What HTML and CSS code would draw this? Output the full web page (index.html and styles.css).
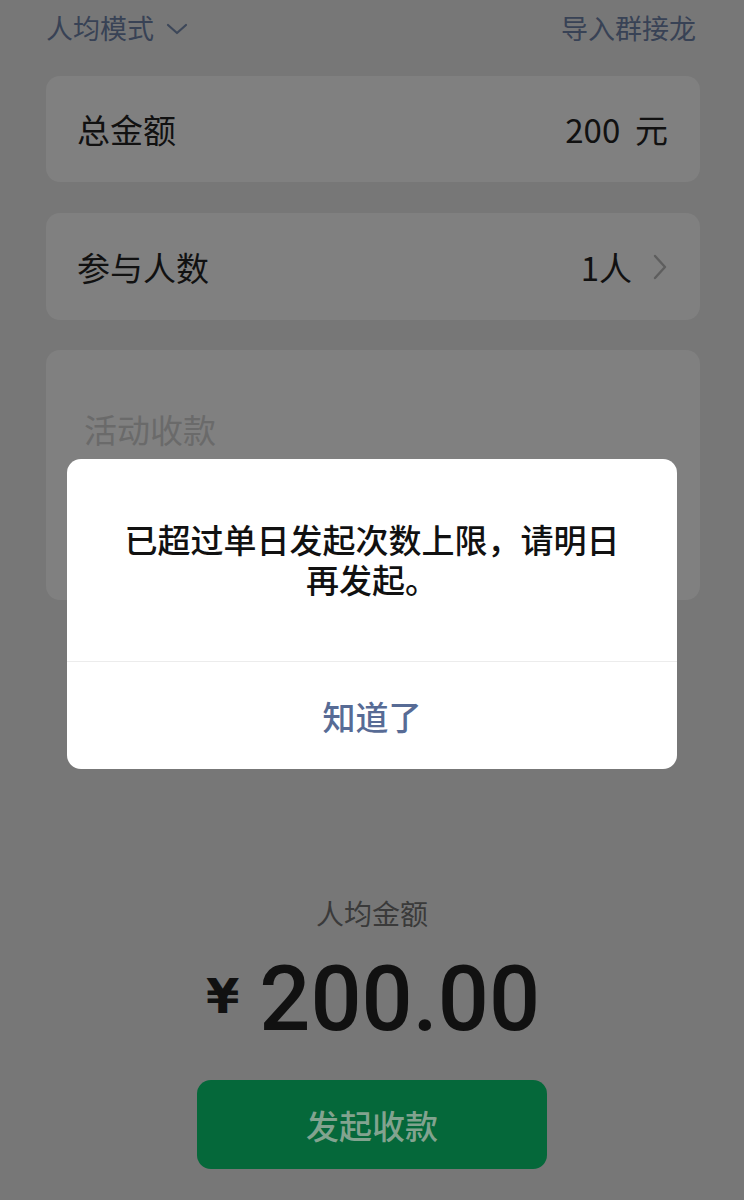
FILE: index.html
```html
<!DOCTYPE html>
<html lang="zh">
<head>
<meta charset="utf-8">
<link rel="stylesheet" href="styles.css">
</head>
<body>
<div class="page">
  <div class="topbar">
    <div class="mode">人均模式
      <svg class="down" width="22" height="14" viewBox="0 0 22 14"><polyline points="2,3 11,11 20,3" fill="none" stroke="#3d4759" stroke-width="2.2" stroke-linecap="round" stroke-linejoin="round"/></svg>
    </div>
    <div class="import">导入群接龙</div>
  </div>

  <div class="card row">
    <span class="label">总金额</span>
    <span class="value">200 &nbsp;元</span>
  </div>

  <div class="card row">
    <span class="label">参与人数</span>
    <span class="value">1人
      <svg class="right" width="16" height="28" viewBox="0 0 16 28"><polyline points="3,3 13,14 3,25" fill="none" stroke="#5e5e5e" stroke-width="2.4" stroke-linecap="round" stroke-linejoin="round"/></svg>
    </span>
  </div>

  <div class="card memo">
    <div class="placeholder">活动收款</div>
  </div>

  <div class="summary">
    <div class="sum-label">人均金额</div>
    <div class="amount"><span class="yen">¥</span><span class="num">200.00</span></div>
    <div class="btn">发起收款</div>
  </div>
</div>

<div class="dialog">
  <div class="dialog-text">已超过单日发起次数上限，请明日再发起。</div>
  <div class="dialog-btn">知道了</div>
</div>
</body>
</html>
```

FILE: styles.css
```css
* { box-sizing: border-box; }
html, body {
  margin: 0;
  padding: 0;
  background: #777777;
  font-family: "Noto Sans CJK SC", "Noto Sans", sans-serif;
}
.page {
  width: 744px;
  height: 1200px;
  padding: 0 46px;
  overflow: hidden;
}
.topbar {
  height: 76px;
  display: flex;
  justify-content: space-between;
  align-items: flex-start;
  padding-top: 9px;
  color: #384255;
  font-size: 27px;
  line-height: 38px;
}
.mode {
  display: flex;
  align-items: center;
  gap: 12px;
}
.down { margin-top: 2px; }
.import { margin-right: 2px; }
.card {
  background: #808080;
  border-radius: 14px;
  margin-right: -2px;
}
.row {
  height: 106px;
  display: flex;
  justify-content: space-between;
  align-items: center;
  padding: 0 32px 0 31px;
  font-size: 33px;
  color: #111111;
  margin-bottom: 31px;
}
.row + .row { height: 107px; margin-bottom: 30px; }
.value {
  display: flex;
  align-items: center;
  gap: 16px;
}
.right { margin-left: 4px; }
.memo {
  height: 250px;
  padding: 56px 38px 0 38px;
}
.placeholder {
  font-size: 33px;
  line-height: 46px;
  color: #6a6a6a;
}
.summary {
  display: flex;
  flex-direction: column;
  align-items: center;
  padding-top: 293px;
}
.sum-label {
  font-size: 28px;
  line-height: 40px;
  color: #3a3a3a;
}
.amount {
  display: flex;
  align-items: flex-start;
  margin-top: 19px;
  height: 128px;
  color: #111111;
  margin-left: 2px;
}
.yen {
  font-family: "DejaVu Sans", sans-serif;
  font-weight: bold;
  font-size: 48px;
  line-height: 48px;
  margin-top: 20px;
  margin-right: 20px;
}
.num {
  font-family: Roboto, sans-serif;
  font-weight: 500;
  font-size: 90px;
  line-height: 96px;
}
.btn {
  width: 350px;
  height: 89px;
  border-radius: 14px;
  background: #05683a;
  color: #82a38f;
  font-size: 33px;
  font-weight: 500;
  display: flex;
  align-items: center;
  justify-content: center;
}
.dialog {
  position: absolute;
  top: 459px;
  left: 67px;
  width: 610px;
  height: 310px;
  background: #ffffff;
  border-radius: 14px;
  overflow: hidden;
}
.dialog-text {
  padding: 60px 54px 62px;
  font-size: 33px;
  line-height: 40px;
  font-weight: 500;
  color: #111111;
  text-align: center;
  border-bottom: 1px solid #ececec;
}
.dialog-btn {
  height: 107px;
  display: flex;
  align-items: center;
  justify-content: center;
  font-size: 33px;
  font-weight: 500;
  color: #576b95;
}
```
